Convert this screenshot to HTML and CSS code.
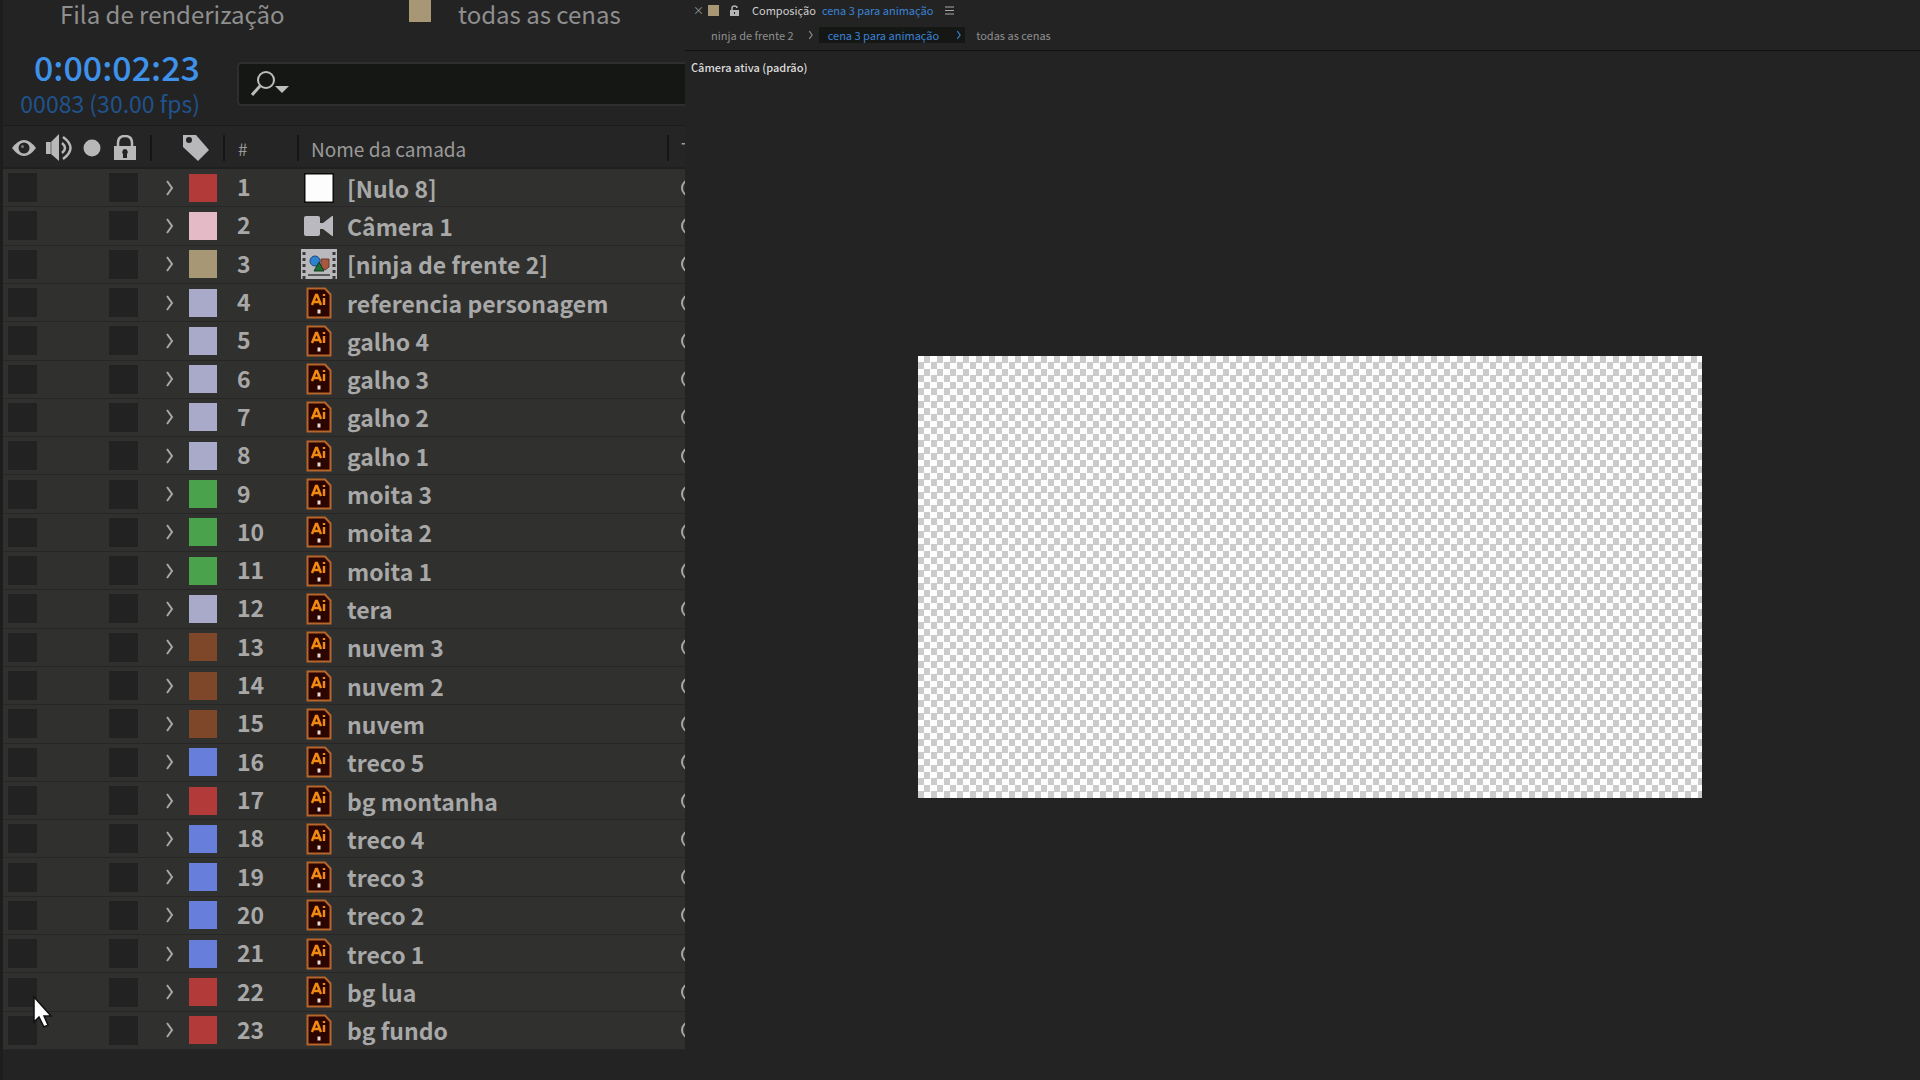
FILE: index.html
```
<!DOCTYPE html>
<html lang="pt-BR">
<head>
    <meta charset="utf-8">
    <title>cena 3 para animação</title>
    <link rel="stylesheet" href="styles.css">
</head>
<body>
    <svg class="sprite" aria-hidden="true">
        <symbol id="icon-ai" viewBox="0 0 26 32">
            <path d="M1.5 1.5h17.5l5.5 6v23h-23z" fill="#2c0500" stroke="#b5662a" stroke-width="2"/>
            <path d="M6 18l4-10h1l4 10M7.500 15h6" fill="none" stroke="#f08a10" stroke-width="2.500"/>
            <path d="M18 11v7M18 7v2" fill="none" stroke="#f08a10" stroke-width="2.400"/>
            <path d="M11.500 22.500h3v4h-3z" fill="#e8dcd6"/>
        </symbol>
        <symbol id="icon-null" viewBox="0 0 30 30">
            <path d="M0 0h30v30H0z" fill="#0c0c0c"/>
            <path d="M1.500 1.500h27v27h-27z" fill="#fdfdfd"/>
        </symbol>
        <symbol id="icon-camera" viewBox="0 0 30 20">
            <path d="M2 0h12q2 0 2 2v5h3l9-7h1v20h-1l-9-7h-3v5q0 2-2 2H2q-2 0-2-2V2q0-2 2-2z" fill="#b9b9bf"/>
        </symbol>
        <symbol id="icon-comp" viewBox="0 0 36 30">
            <path d="M0 0h36v30H0z" fill="#b9b9bd"/>
            <path d="M3 3v27M33 3v27" stroke="#383838" stroke-width="3" stroke-dasharray="3 3"/>
            <path d="M7 26h22" stroke="#585858" stroke-width="2"/>
            <path d="M20 10h8v8l-4 3-4-3z" fill="#a8583f" stroke="#6b3a2c"/>
            <circle cx="14" cy="12" r="5" fill="#2f80cf" stroke="#174a80"/>
            <path d="M18 13l5 9H13z" fill="#1d6b35" stroke="#123a20"/>
        </symbol>
        <symbol id="icon-chevron" viewBox="0 0 10 18">
            <path d="M2 2l5 7-5 7" fill="none" stroke="currentColor" stroke-width="2"/>
        </symbol>
    </svg>

    <main class="workspace">
        <section class="timeline">
            <nav class="timeline-tabs">
                <a href="#" class="queue-tab">Fila de renderização</a>
                <span class="swatch tab-swatch"></span>
                <a href="#">todas as cenas</a>
            </nav>

            <div class="timeline-tools">
                <div class="time">
                    <div class="timecode">0:00:02:23</div>
                    <div class="frames">00083 (30.00 fps)</div>
                </div>
                <label class="search">
                    <svg class="search-icon" width="38" height="26" viewBox="0 0 38 26">
                        <circle cx="15" cy="9" r="8" fill="none" stroke="#bdbdbd" stroke-width="2"/>
                        <path d="M9 15L1 24" stroke="#bdbdbd" stroke-width="3"/>
                        <path d="M24 15h14l-7 7z" fill="#bdbdbd"/>
                    </svg>
                    <input type="text" aria-label="Pesquisar camadas">
                </label>
            </div>

            <table class="layers">
                <thead>
                    <tr class="layer-head">
                        <th class="switches">
                            <svg width="26" height="18" viewBox="0 0 26 18">
                                <path d="M1 9q12-16 24 0q-12 16-24 0z" fill="#b8b8b8"/>
                                <circle cx="13" cy="9" r="5.500" fill="#242424"/>
                                <circle cx="11.500" cy="7.500" r="1.500" fill="#777"/>
                            </svg>
                            <svg width="28" height="28" viewBox="0 0 28 28">
                                <path d="M0 8h5l8-8v27l-8-7H0z" fill="#b8b8b8"/>
                                <path d="M16 9q6 5 0 10M17 3q15 11 0 22" fill="none" stroke="#b8b8b8" stroke-width="2.500"/>
                                <path d="M5 8v12" stroke="#666"/>
                            </svg>
                            <svg width="18" height="18" viewBox="0 0 18 18">
                                <circle cx="9" cy="9" r="8.500" fill="#b8b8b8"/>
                            </svg>
                            <svg class="head-lock" width="22" height="26" viewBox="0 0 22 26">
                                <path d="M4 13V8q0-7 7-7t7 7v5" fill="none" stroke="#b8b8b8" stroke-width="2.500"/>
                                <path d="M0 11h22v14H0z" fill="#b8b8b8"/>
                                <path d="M11 14a3 3 0 0 1 2 5v4H9v-4a3 3 0 0 1 2-5z" fill="#242424"/>
                            </svg>
                        </th>
                        <th class="head-tag">
                            <svg width="28" height="28" viewBox="0 0 28 28">
                                <path d="M1 1h13l13 15-11 11L1 13z" fill="#b8b8bb"/>
                                <circle cx="7" cy="6" r="3" fill="#242424"/>
                            </svg>
                        </th>
                        <th class="head-num">#</th>
                        <th class="head-name">Nome da camada</th>
                        <th class="head-more">T</th>
                    </tr>
                </thead>
                <tbody id="layers"></tbody>
            </table>
        </section>

        <section class="composition">
            <header class="comp-tab">
                <button class="close" aria-label="Fechar">×</button>
                <span class="swatch"></span>
                <svg class="lock" width="9" height="11" viewBox="0 0 9 11">
                    <path d="M2 5V3q0-2 2.500-2T7 3" fill="none" stroke="#b5b5b5" stroke-width="1.500"/>
                    <path d="M0 5h9v6H0z" fill="#b5b5b5"/>
                    <path d="M4 7h1v2H4z" fill="#222"/>
                </svg>
                <span class="comp-kind">Composição</span>
                <a href="#" class="comp-name">cena 3 para animação</a>
                <button class="menu" aria-label="Menu do painel">
                    <svg width="9" height="9" viewBox="0 0 9 9">
                        <path d="M0 1h9M0 4.500h9M0 8h9" stroke="#aaa" stroke-width="1.200"/>
                    </svg>
                </button>
            </header>
            <nav class="crumbs">
                <a href="#">ninja de frente 2</a>
                <svg width="6" height="10" viewBox="0 0 10 18"><use href="#icon-chevron"/></svg>
                <a href="#" class="current">cena 3 para animação
                    <svg width="6" height="10" viewBox="0 0 10 18"><use href="#icon-chevron"/></svg>
                </a>
                <a href="#">todas as cenas</a>
            </nav>
            <div class="camera">Câmera ativa (padrão)</div>
            <div class="stage">
                <div class="canvas"></div>
            </div>
        </section>
    </main>

    <svg class="pointer" width="22" height="34" viewBox="0 0 22 34">
        <path d="M2 2v25l5-5 5 10 4-2-4-9h7z" fill="#fff" stroke="#111" stroke-width="1.500"/>
    </svg>

    <script src="layers.js"></script>
</body>
</html>
```
FILE: styles.css
```
* {
    box-sizing: border-box;
}

body {
    margin: 0;
    background: #232323;
    color: #a6a6a6;
    font-family: "Noto Sans CJK JP", "Noto Sans", sans-serif;
}

a {
    color: inherit;
    text-decoration: none;
}

button {
    padding: 0;
    border: 0;
    background: none;
    color: inherit;
    font: inherit;
}

svg {
    display: block;
    flex: none;
}

.sprite {
    position: absolute;
    width: 0;
    height: 0;
}

.workspace {
    display: flex;
    min-height: 100vh;
}

.swatch {
    width: 11px;
    height: 11px;
    background: #a89775;
}

/* timeline panel */

.timeline {
    display: flex;
    flex-direction: column;
    flex: none;
    width: 685px;
    padding-bottom: 30px;
    border-left: 3px solid #1d1d1d;
    overflow: hidden;
}

.timeline-tabs {
    display: flex;
    align-items: center;
    height: 28px;
    padding-left: 57px;
    font-size: 24px;
    line-height: 28px;
    color: #8f8f8f;
}

.queue-tab {
    width: 349px;
}

.tab-swatch {
    width: 22px;
    height: 22px;
    margin-right: 27px;
    align-self: flex-start;
}

.timeline-tools {
    display: flex;
    align-items: center;
    height: 97px;
}

.time {
    width: 234px;
    padding: 14px 37px 0 0;
    text-align: right;
    white-space: nowrap;
}

.timecode {
    font-size: 34px;
    line-height: 38px;
    font-weight: 500;
    color: #3f92ea;
}

.frames {
    font-size: 23px;
    line-height: 34px;
    color: #20528c;
}

.search {
    display: flex;
    align-items: center;
    flex: 1;
    height: 44px;
    margin-top: 14px;
    padding-left: 12px;
    border: 2px solid #2e2e2e;
    border-right: 0;
    border-radius: 4px 0 0 4px;
    background: #151714;
}

.search input {
    flex: 1;
    min-width: 0;
    border: 0;
    background: none;
    color: #bdbdbd;
    font: inherit;
}

.layers {
    display: grid;
    grid-template-rows: 44px;
    grid-auto-rows: 1fr;
    flex: 1;
}

.layers thead,
.layers tbody {
    display: contents;
}

.layers tr {
    display: grid;
    grid-template-columns: 147px 73px 74px 370px 1fr;
    align-items: center;
}

.layers th,
.layers td {
    padding: 0;
    font-weight: 700;
    text-align: left;
    white-space: nowrap;
}

.layers .layer-head {
    padding-top: 3px;
    border-top: 1px solid #1b1b1b;
    border-bottom: 2px solid #1f1f1f;
    background: #252525;
}

.layer-head th {
    display: flex;
    align-items: center;
    height: 26px;
    border-left: 2px solid #151515;
    font-size: 19px;
    font-weight: 400;
    color: #9a9a9a;
}

.layer-head .switches {
    gap: 9px;
    padding-left: 8px;
    border-left: 0;
}

.head-lock {
    margin-left: 4px;
}

.layer-head .head-tag {
    padding-left: 30px;
}

.layer-head .head-num {
    padding-left: 13px;
    font-size: 17px;
}

.layer-head .head-name {
    padding-left: 12px;
}

.layer-head .head-more {
    padding-left: 12px;
}

.layer {
    min-height: 30px;
    border-bottom: 1px solid #262626;
    background: #30302e;
    font-size: 23px;
    line-height: 30px;
    color: #a8a8a8;
}

.layer td {
    display: flex;
    align-items: center;
}

.layer .toggles {
    gap: 72px;
    padding-left: 5px;
}

.toggles input {
    appearance: none;
    width: 29px;
    height: 29px;
    margin: 0;
    background: #222;
}

.layer .label {
    gap: 14px;
    padding-left: 15px;
}

.label .swatch {
    width: 28px;
    height: 28px;
}

.layer .num {
    padding: 0 0 3px 14px;
}

.layer .name {
    gap: 8px;
    padding-left: 2px;
}

.name .icon {
    display: flex;
    justify-content: center;
    flex: none;
    width: 40px;
}

.layer .parent {
    padding-left: 14px;
}

.red { background: #b23a38; }
.pink { background: #e3bac6; }
.sand { background: #a89775; }
.lavender { background: #a9a9ca; }
.green { background: #4aa34c; }
.brown { background: #7f472a; }
.blue { background: #677edb; }

/* composition panel */

.composition {
    display: flex;
    flex-direction: column;
    flex: 1;
    min-width: 0;
    font-size: 11px;
    line-height: 16px;
}

.comp-tab {
    display: flex;
    align-items: center;
    height: 20px;
    padding-left: 8px;
}

.close {
    width: 8px;
    margin-right: 7px;
    color: #999;
}

.comp-tab .lock {
    margin: 0 13px 0 11px;
}

.comp-kind {
    margin-right: 6px;
    color: #cfcfcf;
}

.comp-name {
    margin-right: 12px;
    color: #3a83d6;
}

.crumbs {
    display: flex;
    align-items: center;
    height: 31px;
    padding-left: 26px;
    border-bottom: 1px solid #101010;
    color: #8f8f8f;
}

.crumbs > svg {
    margin: 0 5px 0 14px;
}

.crumbs .current {
    display: flex;
    align-items: center;
    gap: 17px;
    margin-right: 11px;
    padding: 0 3px 0 9px;
    background: #151714;
    color: #3a83d6;
}

.camera {
    padding: 8px 6px 5px;
    font-weight: 500;
    color: #dcdcdc;
}

.stage {
    display: flex;
    align-items: center;
    justify-content: center;
    flex: 1;
    padding: 0 0 7px 15px;
}

.canvas {
    width: 784px;
    max-width: 100%;
    aspect-ratio: 784 / 442;
    background: conic-gradient(#fdfdfd 25%, #cbcbcb 0 50%, #fdfdfd 0 75%, #cbcbcb 0) 6px 0 / 13px 13px;
}

.pointer {
    position: absolute;
    left: 32px;
    top: 995px;
}
```
FILE: layers.js
```
const layers = [
    ["[Nulo 8]", "red", "null"],
    ["Câmera 1", "pink", "camera"],
    ["[ninja de frente 2]", "sand", "comp"],
    ["referencia personagem", "lavender", "ai"],
    ["galho 4", "lavender", "ai"],
    ["galho 3", "lavender", "ai"],
    ["galho 2", "lavender", "ai"],
    ["galho 1", "lavender", "ai"],
    ["moita 3", "green", "ai"],
    ["moita 2", "green", "ai"],
    ["moita 1", "green", "ai"],
    ["tera", "lavender", "ai"],
    ["nuvem 3", "brown", "ai"],
    ["nuvem 2", "brown", "ai"],
    ["nuvem", "brown", "ai"],
    ["treco 5", "blue", "ai"],
    ["bg montanha", "red", "ai"],
    ["treco 4", "blue", "ai"],
    ["treco 3", "blue", "ai"],
    ["treco 2", "blue", "ai"],
    ["treco 1", "blue", "ai"],
    ["bg lua", "red", "ai"],
    ["bg fundo", "red", "ai"]
];

// width and height of each layer icon
const sizes = { null: [30, 30], camera: [30, 20], comp: [36, 30], ai: [26, 32] };

document.getElementById("layers").innerHTML = layers.map(([name, color, icon], i) => `
    <tr class="layer">
        <td class="toggles">
            <input type="checkbox" aria-label="Vídeo: ${name}">
            <input type="checkbox" aria-label="Bloquear: ${name}">
        </td>
        <td class="label">
            <button aria-label="Expandir ${name}"><svg width="10" height="18"><use href="#icon-chevron"/></svg></button>
            <span class="swatch ${color}"></span>
        </td>
        <td class="num">${i + 1}</td>
        <td class="name">
            <span class="icon"><svg width="${sizes[icon][0]}" height="${sizes[icon][1]}"><use href="#icon-${icon}"/></svg></span>
            ${name}
        </td>
        <td class="parent"><svg width="16" height="20" viewBox="0 0 16 20"><circle cx="9" cy="10" r="8" fill="none" stroke="#a8a8a8" stroke-width="2"/></svg></td>
    </tr>`).join("");
```
